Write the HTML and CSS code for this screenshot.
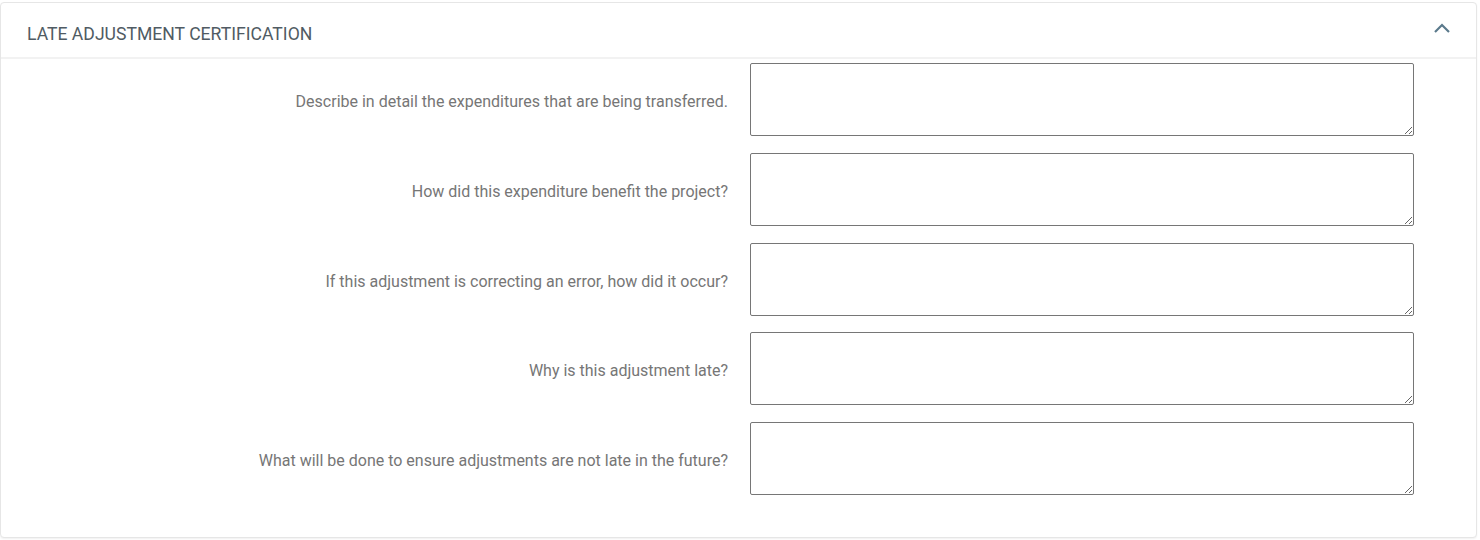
FILE: index.html
```html
<!DOCTYPE html>
<html lang="en">
<head>
    <meta charset="UTF-8">
    <meta name="viewport" content="width=device-width, initial-scale=1.0">
    <title>Late Adjustment Certification</title>
    <link rel="stylesheet" href="styles.css">
</head>
<body>
    <div class="card">
        <div class="card-header">
            <span class="card-title">LATE ADJUSTMENT CERTIFICATION</span>
            <svg class="chevron" width="18" height="12" viewBox="0 0 18 12" aria-hidden="true">
                <path d="M2 10 L9 3 L16 10" fill="none" stroke="#5b7a8c" stroke-width="2.2"/>
            </svg>
        </div>

        <!-- Certification questions -->
        <div class="card-body">
            <div class="form-row">
                <label for="q1">Describe in detail the expenditures that are being transferred.</label>
                <textarea id="q1"></textarea>
            </div>
            <div class="form-row">
                <label for="q2">How did this expenditure benefit the project?</label>
                <textarea id="q2"></textarea>
            </div>
            <div class="form-row">
                <label for="q3">If this adjustment is correcting an error, how did it occur?</label>
                <textarea id="q3"></textarea>
            </div>
            <div class="form-row">
                <label for="q4">Why is this adjustment late?</label>
                <textarea id="q4"></textarea>
            </div>
            <div class="form-row">
                <label for="q5">What will be done to ensure adjustments are not late in the future?</label>
                <textarea id="q5"></textarea>
            </div>
        </div>
    </div>
</body>
</html>
```

FILE: styles.css
```css
body {
    margin: 0;
    padding: 2px 3px 2px 0;
    font-family: Roboto, "Liberation Sans", Arial, sans-serif;
    background: #fff;
}

.card {
    background: #fff;
    border: 1px solid #e6e6e6;
    border-radius: 4px;
    box-shadow: 0 1px 2px rgba(0, 0, 0, 0.06);
    height: 536px;
    box-sizing: border-box;
}

.card-header {
    display: flex;
    align-items: center;
    justify-content: space-between;
    height: 56px;
    padding: 7px 26px 0;
    border-bottom: 2px solid #f2f2f2;
    box-sizing: border-box;
}

.card-title {
    font-size: 17.6px;
    color: #505b63;
}

.chevron {
    margin-right: -1px;
    margin-top: -12px;
}

.card-body {
    padding-top: 4px;
    display: flex;
    flex-direction: column;
    gap: 16.75px;
}

.form-row {
    display: grid;
    grid-template-columns: 727px 664px;
    column-gap: 22px;
    align-items: center;
}

.form-row label {
    text-align: right;
    font-size: 16px;
    color: #767676;
    padding-top: 4px;
}

textarea {
    height: 73px;
    border: 1px solid #767676;
    border-radius: 2px;
    box-sizing: border-box;
    font-family: inherit;
}
```
